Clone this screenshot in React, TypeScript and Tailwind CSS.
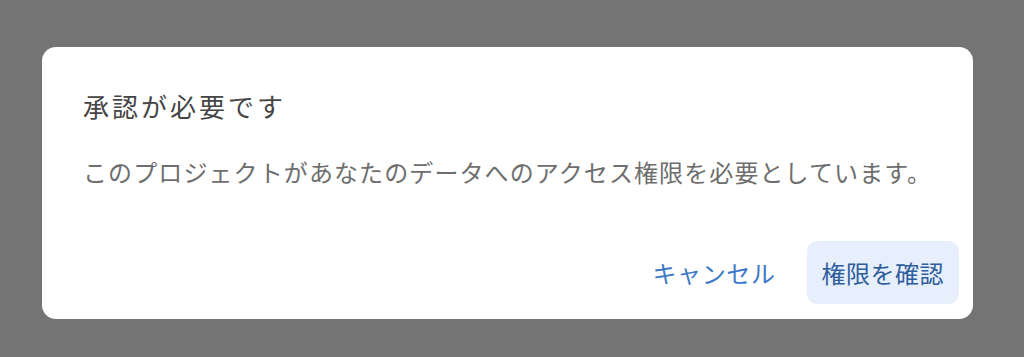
const FONT = { fontFamily: '"Noto Sans CJK JP", "Noto Sans", sans-serif' };

export default function App() {
  return (
    <div className="w-[1024px] h-[357px] bg-[#747474] pt-[47px] pl-[42px]" style={FONT}>
      <div className="w-[931px] h-[272px] bg-white rounded-[14px] flex flex-col pt-[41px] pl-[41px] pr-[14px] pb-[15px]">
        <h2 className="text-[26px] leading-[36px] tracking-[3px] text-[#454545] font-normal">
          承認が必要です
        </h2>
        <p className="mt-[30px] text-[24px] leading-[36px] tracking-[1.1px] text-[#6e6e6e]">
          このプロジェクトがあなたのデータへのアクセス権限を必要としています。
        </p>
        <div className="mt-auto flex justify-end items-center gap-[16px]">
          <button className="h-[63px] px-[15px] rounded-[10px] text-[24px] tracking-[0.6px] text-[#3d79c6]">
            キャンセル
          </button>
          <button className="h-[63px] px-[15px] rounded-[10px] bg-[#e7eefc] text-[24px] tracking-[0.5px] text-[#2f5e9c]">
            権限を確認
          </button>
        </div>
      </div>
    </div>
  );
}
